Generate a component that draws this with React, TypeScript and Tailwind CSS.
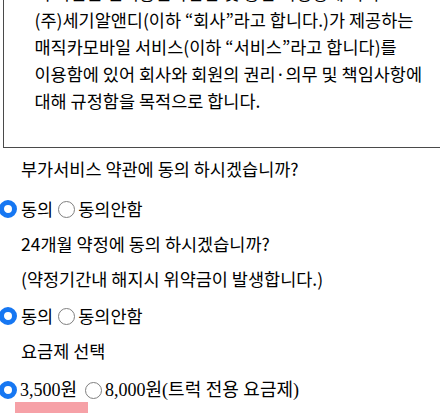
import React from 'react';

const boxLines = [
  '이 약관은 전기통신사업법 및 동법 시행령에 따라 ',
  '(주)세기알앤디(이하 “회사”라고 합니다.)가 제공하는',
  '매직카모바일 서비스(이하 “서비스”라고 합니다)를',
  '이용함에 있어 회사와 회원의 권리·의무 및 책임사항에',
  '대해 규정함을 목적으로 합니다.',
];

function Radio({ checked }: { checked?: boolean }) {
  return checked ? (
    <span className="inline-block w-[18px] h-[18px] rounded-full border-[5.5px] border-[#1677f2] bg-white align-middle shrink-0" />
  ) : (
    <span className="inline-block w-[17px] h-[17px] rounded-full border border-[#808080] bg-white align-middle shrink-0" />
  );
}

export default function App() {
  return (
    <div
      className="relative w-[440px] h-[414px] overflow-hidden bg-white text-black text-[17.5px]"
      style={{ fontFamily: '"Noto Sans CJK KR", "Noto Sans", sans-serif' }}
    >
      <div className="ml-[3px] mt-[-33.5px] w-[445px] border-[1.5px] border-[#4a4a4a] pt-[11.5px] pb-[32.5px] pl-[30.5px]">
        {boxLines.map((line, i) => (
          <div key={i} className="h-[27px] leading-[27px] whitespace-nowrap">
            {line}
          </div>
        ))}
      </div>

      <div className="mt-[3.5px] h-[36px] leading-[36px] pl-[21px]">부가서비스 약관에 동의 하시겠습니까?</div>

      <div className="h-[44px] flex items-center ml-[-1px]">
        <Radio checked />
        <span className="ml-[4px]">동의</span>
        <span className="ml-[5px] flex"><Radio /></span>
        <span className="ml-[3px]">동의안함</span>
      </div>

      <div className="h-[26px] leading-[26px] pl-[21px]">24개월 약정에 동의 하시겠습니까?</div>
      <div className="h-[44px] leading-[44px] pl-[21px]">(약정기간내 해지시 위약금이 발생합니다.)</div>

      <div className="h-[30px] flex items-center ml-[-1px]">
        <Radio checked />
        <span className="ml-[4px]">동의</span>
        <span className="ml-[5px] flex"><Radio /></span>
        <span className="ml-[3px]">동의안함</span>
      </div>

      <div className="h-[40px] leading-[40px] pl-[21px]">요금제 선택</div>

      <div
        className="h-[38px] flex items-center ml-[-1px] text-[18px]"
        style={{ fontFamily: '"Liberation Serif", "Noto Sans CJK KR", serif' }}
      >
        <Radio checked />
        <span className="ml-[3px]">3,500원</span>
        <span className="ml-[8px] flex"><Radio /></span>
        <span className="ml-[3px]">8,000원(트럭 전용 요금제)</span>
      </div>

      <div className="absolute left-[15px] top-[402px] w-[73px] h-[11px] bg-[#f6a1a7] blur-[0.6px]" />
    </div>
  );
}
